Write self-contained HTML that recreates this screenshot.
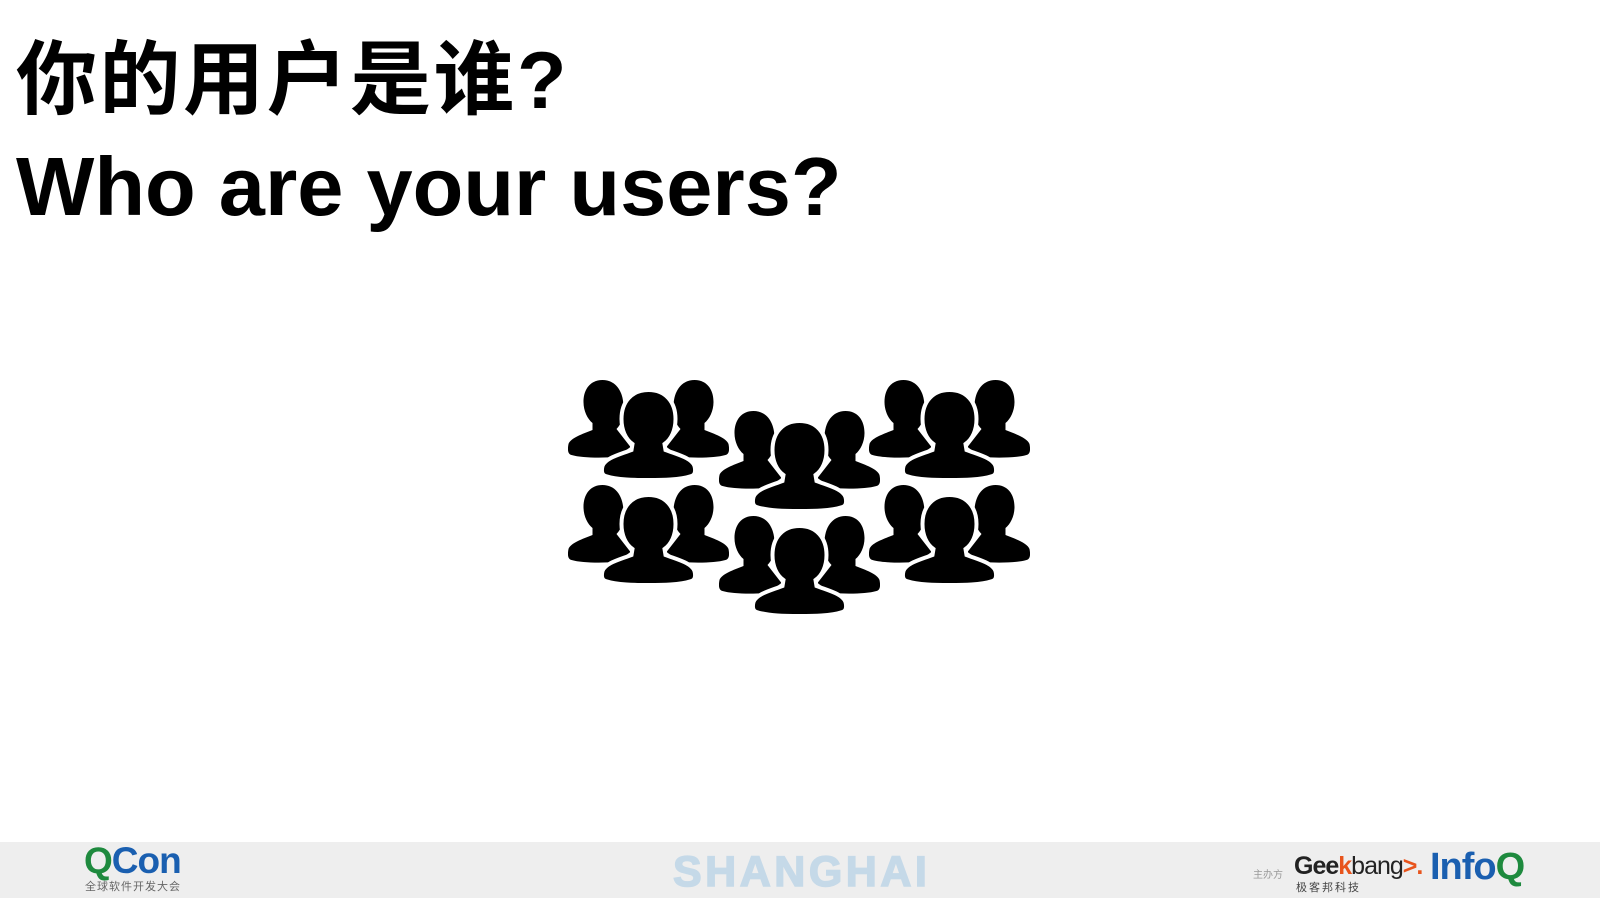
<!DOCTYPE html>
<html><head><meta charset="utf-8"><style>
body{margin:0;width:1600px;height:900px;background:#fff;position:relative;overflow:hidden;font-family:"Liberation Sans","Noto Sans CJK SC",sans-serif}
.t{position:absolute;left:16px;font-weight:bold;color:#000;white-space:nowrap}
#cn{top:26px;font-size:81px;line-height:110px;letter-spacing:2.5px;font-family:"Liberation Sans","Noto Sans CJK SC",sans-serif}
#en{top:137px;font-size:83px;line-height:100px}
#foot{position:absolute;left:0;top:842px;width:1600px;height:56px;background:#eeeeee}
.grp{position:absolute;width:161px;height:98px}
</style></head><body>
<div id="cn" class="t">你的用户是谁?</div>
<div id="en" class="t">Who are your users?</div>

<svg width="0" height="0" style="position:absolute">
<defs>
<symbol id="g" viewBox="0 0 160 98">
 <g fill="#000">
  <path d="M34 0c-12 0-19 9-19 22c0 9 4 17 9 21l0 7c-10 4-22 8-24 14c-1 5-1 10 3 11c10 3 30 3 45 2l14-10l-14-18c5-5 7-12 7-22c0-16-8-27-21-27z"/>
  <path d="M126 0c12 0 19 9 19 22c0 9-4 17-9 21l0 7c10 4 22 8 24 14c1 5 1 10-3 11c-10 3-30 3-45 2l-14-10l14-18c-5-5-7-12-7-22c0-16 8-27 21-27z"/>
 </g>
 <path d="M80 10c-17 0-27 12-27 29c0 11 4 20 11 25l-1 6c-13 5-26 8-29 16c-1 4-1 9 3 10c12 4 30 4 43 4s31 0 43-4c4-1 4-6 3-10c-3-8-16-11-29-16l-1-6c7-5 11-14 11-25c0-17-10-29-27-29z" fill="#000" stroke="#fff" stroke-width="4"/>
</symbol>
</defs></svg>

<svg class="grp" style="left:568px;top:380px"><use href="#g"/></svg>
<svg class="grp" style="left:719px;top:411px"><use href="#g"/></svg>
<svg class="grp" style="left:869px;top:380px"><use href="#g"/></svg>
<svg class="grp" style="left:568px;top:485px"><use href="#g"/></svg>
<svg class="grp" style="left:719px;top:516px"><use href="#g"/></svg>
<svg class="grp" style="left:869px;top:485px"><use href="#g"/></svg>

<div id="foot">
 <div style="position:absolute;left:84px;top:-2px;font-weight:bold;font-size:37px;line-height:42px;letter-spacing:-1px"><span style="color:#1e8a3e">Q</span><span style="color:#1a5fb0">Con</span></div>
 <div style="position:absolute;left:85px;top:36px;font-size:11px;color:#666;letter-spacing:1px">全球软件开发大会</div>
 <div style="position:absolute;left:673px;top:6px;font-weight:bold;font-size:43px;line-height:48px;color:#c5d9e8;letter-spacing:3.5px;-webkit-text-stroke:1.5px #c5d9e8">SHANGHAI</div>
 <div style="position:absolute;left:1253px;top:24px;font-size:10px;color:#999">主办方</div>
 <div style="position:absolute;left:1294px;top:10px;font-weight:bold;font-size:25px;line-height:28px;color:#222;letter-spacing:-1px">Gee<span style="color:#e8541c">k</span><span style="font-weight:normal">bang</span><span style="color:#e8541c">&gt;.</span></div>
 <div style="position:absolute;left:1296px;top:37px;font-size:11px;color:#444;letter-spacing:2px">极客邦科技</div>
 <div style="position:absolute;left:1430px;top:3px;font-weight:bold;font-size:38px;line-height:44px;color:#1a5fb0;letter-spacing:-1px">Info<span style="color:#1e8a3e">Q</span></div>
</div>
</body></html>
